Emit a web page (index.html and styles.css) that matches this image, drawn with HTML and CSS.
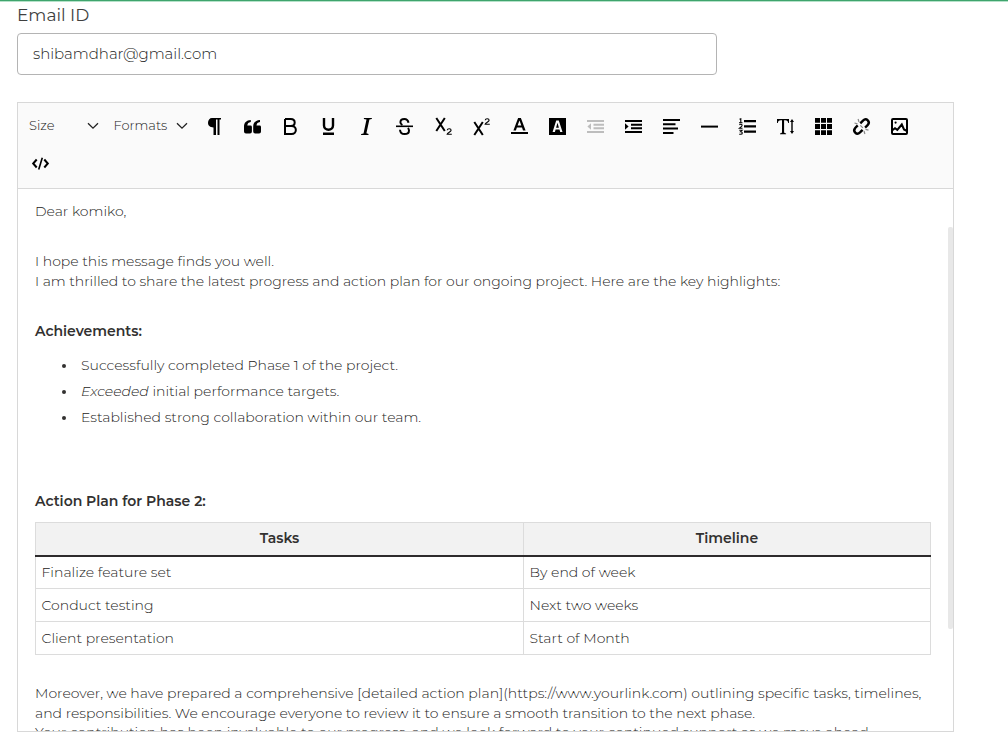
FILE: index.html
```html
<!DOCTYPE html>
<html lang="en">
<head>
<meta charset="utf-8">
<title>Email editor</title>
<link rel="stylesheet" href="styles.css">
</head>
<body>
<main class="page">
  <label class="label" for="email">Email ID</label>
  <input class="input" id="email" type="text" value="shibamdhar@gmail.com">
  <section class="editor">
    <div class="toolbar">
      <div class="select select-size"><span>Size</span><svg class="chev" viewBox="0 0 12 8"><path d="M1 1.2l5 5 5-5"/></svg></div>
      <div class="select select-formats"><span>Formats</span><svg class="chev" viewBox="0 0 12 8"><path d="M1 1.2l5 5 5-5"/></svg></div>
      <div class="btn"><svg viewBox="0 0 17 17"><path d="M6 0h9v1.500h-1.500V17h-2V1.500H10V17H7.500V9.500C4 9.500 2 7.500 2 4.800S3.600 0 6 0z"/></svg></div>
      <div class="btn"><svg viewBox="0 0 17 17"><path d="M6.800 2v2C4.500 4.300 3.500 5.500 3.300 7.500H6.500q1.400 0 1.400 1.400v4.700q0 1.900-1.900 1.900H2Q0 15.500 0 13.500V8.800C0 4.600 2.400 2.200 6.800 2zM16 2v2c-2.300.3-3.300 1.500-3.500 3.500h3.100q1.400 0 1.400 1.400v4.700q0 1.900-1.900 1.900h-3.900q-2 0-2-2V8.800C9.200 4.600 11.600 2.200 16 2z"/></svg></div>
      <div class="btn"><svg viewBox="0 0 17 17"><path class="line" d="M3 1h5.800c5.200 0 5.200 7 0 7H3m0 0h6.500c5.800 0 5.800 8 0 8H3V1"/></svg></div>
      <div class="btn"><svg viewBox="0 0 17 17"><path class="line heavy" d="M4 0v7.500c0 5.600 9 5.600 9 0V0"/><path d="M3 14.500h11V17H3z"/></svg></div>
      <div class="btn"><svg viewBox="0 0 17 17"><path d="M6 0h8l-.3 1.100-2.300.5-3 13.700 2.200.6-.2 1.100H3l.2-1.100 2.300-.5L8.500 1.600 5.800 1.100z"/></svg></div>
      <div class="btn"><svg viewBox="0 0 17 17"><path class="line" d="M12.500 4.700C12 2.200 10.600 1 8.400 1 6 1 4.400 2.300 4.400 4.300c0 1.300.7 2.200 2 2.800M4 11.700C4.200 14.500 5.800 16 8.500 16s4.500-1.400 4.500-3.600c0-1-.4-1.800-1.200-2.400"/><path d="M0 7.500h17v1.600H0z"/></svg></div>
      <div class="btn"><svg viewBox="0 0 17 17"><path class="line" d="M1.300 0l8.500 13M9.800 0L1.300 13"/><path class="fine" d="M12.200 12.300c.3-2.200 3.900-2 3.900 0 0 1.700-3.700 2-4 4h4.700"/></svg></div>
      <div class="btn"><svg viewBox="0 0 17 17"><path class="line" d="M1.300 4l8.500 13M9.800 4L1.300 17"/><path class="fine" d="M12.200 2.300c.3-2.200 3.900-2 3.900 0 0 1.700-3.700 2-4 4h4.700"/></svg></div>
      <div class="btn"><svg viewBox="0 0 17 17"><path fill-rule="evenodd" d="M7.100 0h2.800l4.700 12.500H12l-1-2.900H5.900l-1 2.900H2.400zM6.600 7.600h3.700L8.500 2.500zM0 14h17v2H0z"/></svg></div>
      <div class="btn"><svg viewBox="0 0 17 17"><path fill-rule="evenodd" d="M0 0h17v17H0zM7.200 2.500L3.600 14h2.300l.7-2.500h3.900l.7 2.500h2.300L9.800 2.500zM8.500 4.800l1.400 4.900H7.100z"/></svg></div>
      <div class="btn off"><svg viewBox="0 0 17 17"><path d="M0 2h17v2H0zM6.500 5.700H17v2H6.500zM6.500 9.300H17v2H6.500zM0 13h17v2H0zM4 5.300v6.400L.4 8.500z"/></svg></div>
      <div class="btn"><svg viewBox="0 0 17 17"><path d="M0 2h17v2H0zM6 5.700h11v2H6zM6 9.300h11v2H6zM0 13h17v2H0zM0 5.300v6.400l3.600-3.200z"/></svg></div>
      <div class="btn"><svg viewBox="0 0 17 17"><path d="M0 1h17v2H0zM0 5.300h12.500v2H0zM0 9.600h15v2H0zM0 14h10.500v2H0z"/></svg></div>
      <div class="btn"><svg viewBox="0 0 17 17"><path d="M0 7.600h17v2H0z"/></svg></div>
      <div class="btn"><svg viewBox="0 0 17 17"><path d="M5 2h12v2.300H5zM5 7.300h12v2.300H5zM5 12.500h12v2.300H5z"/><path class="fine" d="M.5 1.200L1.800.7v4M0 4.700h3.500M.3 6.800c2.200-1.300 3.800.2 2 1.900L.5 10.200h3M.3 12.300h2.800L1.600 13.700c2.300 0 2.300 2.600 0 2.600H.2"/></svg></div>
      <div class="btn"><svg viewBox="0 0 17 17"><path d="M0 1h12v4h-.8c-.3-2-1-2.800-3-2.800H7.100v12q0 1.100 2 1.200v.8H3v-.8q2-.1 2-1.200v-12H3.800c-2 0-2.700.8-3 2.800H0z"/><path d="M15 1l2 3h-1.300v9H17l-2 3-2-3h1.300V4H13z"/></svg></div>
      <div class="btn"><svg viewBox="0 0 17 17"><path d="M0 0h5v4.700H0zM6 0h5v4.700H6zM12 0h5v4.700h-5zM0 6.100h5v4.800H0zM6 6.100h5v4.800H6zM12 6.100h5v4.800h-5zM0 12.300h5V17H0zM6 12.300h5V17H6zM12 12.300h5V17h-5z"/></svg></div>
      <div class="btn"><svg viewBox="0 0 17 17"><path class="line heavy" d="M7.300 5.300l2.700-2.700c3.400-3.200 7.800 1.200 4.600 4.600l-2.500 2.400M4.700 7.300L2.400 9.700c-3.200 3.500 1.200 7.900 4.600 4.700l2.600-2.600"/><path class="faint" d="M5.100 1l.9 3M1.500 5l3 .8M7.300 7.300l2.600 2.600M11 13l.9 3M12.500 11.300l3 .8"/></svg></div>
      <div class="btn"><svg viewBox="0 0 17 17"><rect class="line" x="1" y="1" width="15" height="15" rx="1"/><path class="line" d="M1 12.500l3-2.300 2.300 1.700 4.500-5.400 2.200 5 3 1.500"/><circle cx="4.600" cy="4.600" r="1.100"/></svg></div>
      <div class="btn btn-code"><svg viewBox="0 0 17 17"><path class="line" d="M4.700 4.500l-3.500 4 3.500 4M12.300 4.500l3.500 4-3.500 4"/><path class="line slash" d="M10.300 2.800L6.700 14.400"/></svg></div>
    </div>
    <div class="content">
      <p class="para greeting">Dear komiko,</p>
      <p class="para intro">I hope this message finds you well.<br><span class="snug">I am thrilled to share the latest progress and action plan for our ongoing project. Here are the key highlights:</span></p>
      <p class="para"><strong>Achievements:</strong></p>
      <ul class="list">
        <li>Successfully completed Phase 1 of the project.</li>
        <li><em>Exceeded</em> initial performance targets.</li>
        <li>Established strong collaboration within our team.</li>
      </ul>
      <p class="para"><strong>Action Plan for Phase 2:</strong></p>
      <table class="plan">
        <thead><tr><th class="col-task">Tasks</th><th>Timeline</th></tr></thead>
        <tbody>
          <tr><td>Finalize feature set</td><td>By end of week</td></tr>
          <tr><td>Conduct testing</td><td>Next two weeks</td></tr>
          <tr><td>Client presentation</td><td>Start of Month</td></tr>
        </tbody>
      </table>
      <p class="para closing">Moreover, we have prepared a comprehensive [detailed action plan](https://www.yourlink.com) outlining specific tasks, timelines,<br>and responsibilities. We encourage everyone to review it to ensure a smooth transition to the next phase.<br><span class="snug">Your contribution has been invaluable to our progress, and we look forward to your continued support as we move ahead.</span></p>
      <div class="scrollbar"></div>
    </div>
  </section>
</main>
</body>
</html>
```
FILE: styles.css
```css
* { box-sizing: border-box; }
body {
  margin: 0;
  height: 754px;
  overflow: hidden;
  background: #fff;
  color: #242322;
  font-family: Montserrat, Inter, "Open Sans", sans-serif;
  font-weight: 300;
  font-size: 14px;
}
.page {
  height: 754px;
  padding: 4px 54px 0 17px;
  border-top: 1px solid #3fa46d;
  box-shadow: inset 0 1px 0 #b5e2c9;
}
.label {
  display: block;
  height: 28px;
  line-height: 20px;
  font-size: 17px;
  font-weight: 400;
  color: #3f3f3f;
}
.input {
  display: block;
  width: 700px;
  height: 42px;
  padding: 0 15px 2px;
  border: 1px solid #b4b4b4;
  border-radius: 4px;
  background: #fff;
  font: 300 15px Montserrat, Inter, sans-serif;
  letter-spacing: -0.04px;
  color: #222;
}
.editor {
  width: 937px;
  height: 630px;
  margin-top: 27px;
  border: 1px solid #d8d8d8;
  display: flex;
  flex-direction: column;
}
.toolbar {
  display: flex;
  flex-wrap: wrap;
  flex: none;
  height: 86px;
  padding: 4px 30px 4px 11px;
  align-content: flex-start;
  background: #fafafa;
  border-bottom: 1px solid #d8d8d8;
}
.select {
  display: flex;
  align-items: center;
  justify-content: space-between;
  height: 38px;
  padding-bottom: 2px;
  font-size: 13px;
  color: #212121;
}
.select .chev { margin-top: 2px; }
.select-size { width: 70px; margin-right: 14.500px; }
.select-formats { width: 74.500px; margin-right: 7.500px; }
.chev { width: 12px; height: 8px; fill: none; stroke: #222; stroke-width: 1.300; }
.btn {
  display: flex;
  align-items: center;
  justify-content: center;
  width: 38.080px;
  height: 38px;
}
.btn svg { width: 17px; height: 17px; fill: #000; overflow: visible; }
.btn-code { margin-left: -8px; height: 37px; }
.btn.off svg { fill: #bdbdbd; }
.btn .line { fill: none; stroke: #000; stroke-width: 2; }
.btn .heavy { stroke-width: 2.400; }
.btn .slash { stroke-width: 1.600; }
.btn .fine { fill: none; stroke: #000; stroke-width: 1.100; }
.btn .faint { fill: none; stroke: #888; stroke-width: 1.200; }
.content {
  position: relative;
  flex: 1;
  min-height: 0;
  padding: 12px 22px 0 17px;
  overflow: hidden;
}
.para { margin: 0; line-height: 20px; white-space: nowrap; }
.greeting { margin-bottom: 30px; }
.intro { margin-bottom: 30px; }
.snug { letter-spacing: -0.020px; }
strong { font-weight: 600; color: #323130; }
.list {
  margin: 14px 0 64px;
  padding-left: 27px;
  line-height: 20px;
  list-style: none;
}
.list li {
  display: flex;
  align-items: center;
  white-space: pre;
  margin-bottom: 6px;
}
.list li::before {
  content: "";
  width: 4px;
  height: 4px;
  margin: 2px 15px 0 0;
  border-radius: 50%;
  background: #323130;
}
.plan {
  width: 896px;
  margin-top: 11px;
  border-collapse: collapse;
  table-layout: fixed;
}
.plan th, .plan td {
  height: 33px;
  padding: 0 6px 1px 5.500px;
  border: 1px solid #dcdcdc;
  line-height: 20px;
  text-align: left;
}
.plan th {
  padding: 0 6px 2px;
  background: #f2f2f2;
  border-bottom: 2px solid #2d2b2c;
  color: #323130;
  font-weight: 600;
  text-align: center;
}
.col-task { width: 488px; }
.closing { margin-top: 29px; line-height: 19.600px; }
.scrollbar {
  position: absolute;
  top: 38px;
  right: 0;
  width: 5px;
  height: 402px;
  border-radius: 2px;
  background: #e8e8e8;
}
```
